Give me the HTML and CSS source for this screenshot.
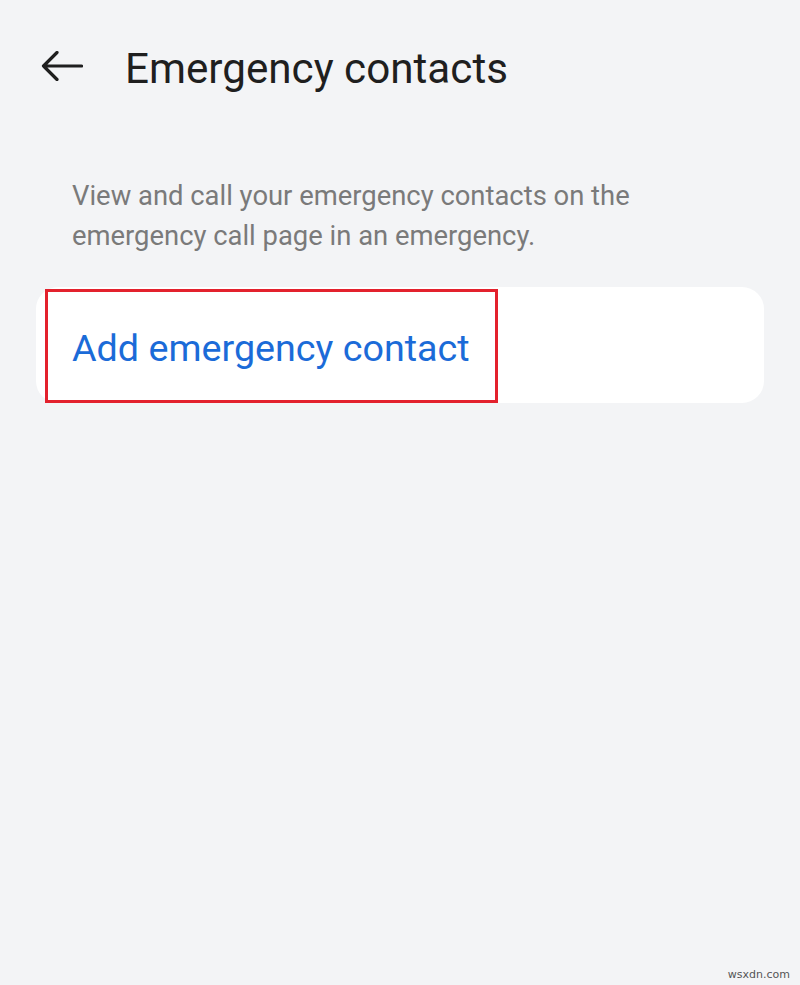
FILE: index.html
```html
<!DOCTYPE html>
<html>
<head>
<meta charset="utf-8">
<link rel="stylesheet" href="styles.css">
</head>
<body>
<div class="page">
  <header class="topbar">
    <svg class="back" width="42" height="30" viewBox="0 0 42 30">
      <path d="M16 1.5 L2.5 15 L16 28.5 M2.5 15 H40.5" fill="none" stroke="#1f1f1f" stroke-width="3.2" stroke-linecap="round" stroke-linejoin="round"/>
    </svg>
    <h1 class="title">Emergency contacts</h1>
  </header>
  <p class="desc">View and call your emergency contacts on the emergency call page in an emergency.</p>
  <div class="card">
    <div class="highlight">
      <span class="add">Add emergency contact</span>
    </div>
  </div>
  <div class="watermark">wsxdn.com</div>
</div>
</body>
</html>
```
FILE: styles.css
```css
html, body {
  margin: 0;
  padding: 0;
  background: #f3f4f6;
}
.page {
  width: 800px;
  height: 985px;
  position: relative;
  font-family: Roboto, "Noto Sans", sans-serif;
}
.topbar {
  display: flex;
  align-items: center;
  height: 30px;
  padding: 51px 0 0 41px;
}
.back {
  flex: none;
  display: block;
}
.title {
  margin: 6px 0 0 42px;
  font-size: 42.2px;
  font-weight: 400;
  color: #1f1f1f;
  line-height: 30px;
}
.desc {
  margin: 95px 140px 0 72px;
  font-size: 27.4px;
  line-height: 40px;
  color: #7a7a7a;
  font-weight: 400;
}
.card {
  margin: 31px 36px 0 36px;
  height: 116px;
  background: #ffffff;
  border-radius: 22px;
  display: flex;
  align-items: stretch;
}
.highlight {
  margin-left: 9px;
  width: 453px;
  border: 3px solid #e3212d;
  display: flex;
  align-items: center;
  padding: 4px 0 0 24px;
  box-sizing: border-box;
  height: 114px;
  margin-top: 2px;
}
.add {
  font-size: 37.7px;
  color: #1b6bd8;
  font-weight: 400;
}
.watermark {
  position: absolute;
  right: 10px;
  bottom: 4px;
  font-size: 11px;
  color: #555;
  font-family: "DejaVu Sans", sans-serif;
}
```
